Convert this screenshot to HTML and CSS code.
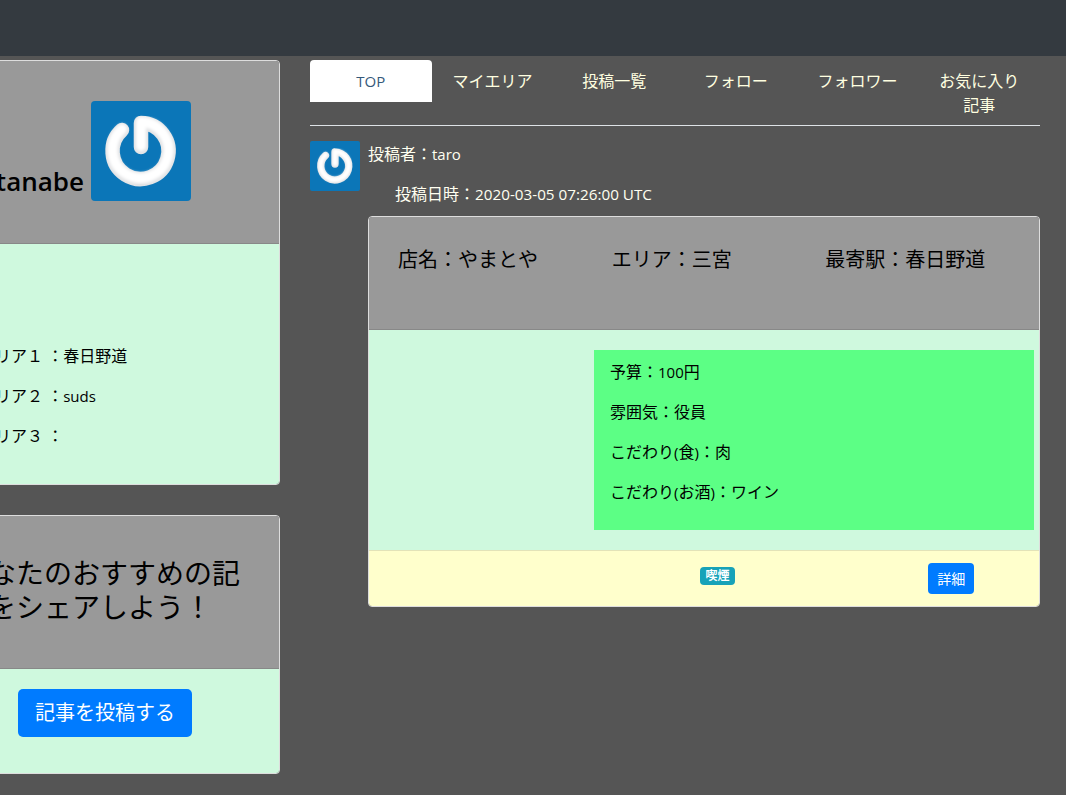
FILE: index.html
```html
<!DOCTYPE html>
<html lang="ja">
  <head>
    <title>マイページ</title>
    <meta charset="utf-8">
    <link rel="stylesheet" href="styles.css">
  </head>
  <body>
    <svg class="defs" width="0" height="0">
      <filter id="soft" x="-10%" y="-10%" width="120%" height="120%">
        <feGaussianBlur stdDeviation="1.6"/>
      </filter>
      <symbol id="logo" viewBox="0 0 100 100">
        <rect width="100" height="100" rx="4" fill="#0b76b8"/>
        <g fill="none" stroke-linecap="round">
          <path stroke="#e2e3e5" stroke-width="14.500" d="M50 22A28 28 0 1 1 31 29M50 22V46"/>
          <path stroke="#fff" stroke-width="10" filter="url(#soft)" d="M50 21A28 28 0 1 1 31 28M50 21V45"/>
        </g>
      </symbol>
    </svg>

    <header class="navbar"></header>

    <div class="page">
      <aside class="side">
        <div class="card">
          <div class="card-head profile-head">
            <span class="name">watanabe</span>
            <svg class="logo"><use href="#logo"/></svg>
          </div>
          <div class="card-body profile-body">
            <p>エリア１ ：春日野道</p>
            <p>エリア２ ：<span class="latin">suds</span></p>
            <p>エリア３ ：</p>
          </div>
        </div>
        <div class="card">
          <div class="card-head share-head">
            <h2>あなたのおすすめの記事をシェアしよう！</h2>
          </div>
          <div class="card-body share-body">
            <a class="btn btn-lg">記事を投稿する</a>
          </div>
        </div>
      </aside>

      <main class="main">
        <nav class="tabs">
          <a class="tab active"><span class="latin">TOP</span></a>
          <a class="tab">マイエリア</a>
          <a class="tab">投稿一覧</a>
          <a class="tab">フォロー</a>
          <a class="tab">フォロワー</a>
          <a class="tab">お気に入り記事</a>
        </nav>

        <div class="post">
          <svg class="avatar"><use href="#logo"/></svg>
          <div class="post-body">
            <p class="author">投稿者：<span class="latin">taro</span></p>
            <p class="date">投稿日時：<span class="stamp">2020-03-05 07:26:00 UTC</span></p>
            <div class="card">
              <div class="card-head shop-head">
                <span>店名：やまとや</span>
                <span>エリア：三宮</span>
                <span>最寄駅：春日野道</span>
              </div>
              <div class="card-body shop-body">
                <div class="shop-info">
                  <p>予算：<span class="latin">100</span>円</p>
                  <p>雰囲気：役員</p>
                  <p>こだわり<span class="latin">(</span>食<span class="latin">)</span>：肉</p>
                  <p>こだわり<span class="latin">(</span>お酒<span class="latin">)</span>：ワイン</p>
                </div>
              </div>
              <div class="card-foot">
                <span class="badge">喫煙</span>
                <a class="btn btn-sm">詳細</a>
              </div>
            </div>
          </div>
        </div>
      </main>
    </div>
  </body>
</html>
```

FILE: styles.css
```css
html, body {
  height: 100%;
  margin: 0;
  overflow: hidden;
}
body {
  background-color: #555;
  color: #000;
  font-family: "Open Sans", "Noto Sans CJK JP", sans-serif;
  font-size: 16px;
  line-height: 24px;
}
p {
  margin: 0 0 16px;
}
.latin {
  font-size: 15px;
}
.stamp {
  font-size: 15.250px;
}
.defs {
  display: block;
  height: 0;
}
.navbar {
  height: 56px;
  background-color: #343a40;
}
.page {
  display: flex;
  margin-left: -85px;
  width: 1140px;
}
.side {
  box-sizing: border-box;
  width: 380px;
  padding: 4px 15px 0;
}
.side .card {
  margin-bottom: 30px;
}
.main {
  box-sizing: border-box;
  width: 760px;
  padding: 4px 15px 0;
}
.card {
  border: 1px solid #ddd;
  border-radius: 4px;
  overflow: hidden;
}
.card-head {
  background-color: #999;
  border-bottom: 1px solid #888;
}
.card-body {
  background-color: #cff9de;
}
.profile-head {
  display: flex;
  justify-content: flex-end;
  align-items: flex-end;
  gap: 7px;
  padding: 40px 88px 42px 0;
}
.name {
  font-size: 26px;
  font-weight: 600;
  line-height: 39px;
}
.logo {
  width: 100px;
  height: 100px;
}
.profile-body {
  padding: 100px 0 20px 48px;
}
.share-head {
  padding: 41px 31px 44px 29px;
}
.share-head h2 {
  margin: 0;
  font-size: 28px;
  font-weight: 400;
  line-height: 33.600px;
}
.share-body {
  padding: 20px 0 36px 87px;
}
.btn {
  display: inline-block;
  background-color: #007bff;
  color: #fff;
  border-radius: 4px;
}
.btn-lg {
  padding: 9px 17px;
  font-size: 20px;
  line-height: 30px;
  border-radius: 5px;
}
.btn-sm {
  padding: 5px 9px;
  font-size: 14px;
  line-height: 21px;
  margin-left: 103px;
  justify-self: start;
}
.tabs {
  display: flex;
  align-items: flex-start;
  border-bottom: 1px solid #dee2e6;
}
.tab {
  box-sizing: border-box;
  flex: 1;
  padding: 9px 16px 8px;
  color: #ffffe0;
  text-align: center;
}
.tab.active {
  padding-bottom: 9px;
  background-color: #fff;
  color: #35597a;
  border-radius: 4px 4px 0 0;
}
.post {
  display: flex;
  align-items: flex-start;
  gap: 8px;
  margin-top: 15px;
}
.avatar {
  flex: none;
  width: 50px;
  height: 50px;
}
.post-body {
  flex: 1;
  color: #fffff0;
  padding-top: 1px;
}
.date {
  margin: 0 0 10px 27px;
}
.post-body .card {
  color: #000;
}
.shop-head {
  display: grid;
  grid-template-columns: repeat(3, 1fr);
  padding: 28px 0 54px 29px;
  font-size: 20px;
  line-height: 30px;
}
.shop-body {
  padding: 20px 5px 20px 225px;
}
.shop-info {
  height: 170px;
  padding: 10px 0 0 16px;
  background-color: #5cff85;
}
.card-foot {
  display: grid;
  grid-template-columns: repeat(3, 1fr);
  align-items: start;
  padding: 12px 0 12px 29px;
  background-color: #ffc;
  border-top: 1px solid #e3e3b8;
}
.badge {
  grid-column: 2;
  justify-self: center;
  margin: 4px 2px 0 0;
  padding: 0 5px;
  background-color: #17a2b8;
  color: #fff;
  border-radius: 4px;
  font-size: 12px;
  font-weight: 700;
  line-height: 18px;
}
```
